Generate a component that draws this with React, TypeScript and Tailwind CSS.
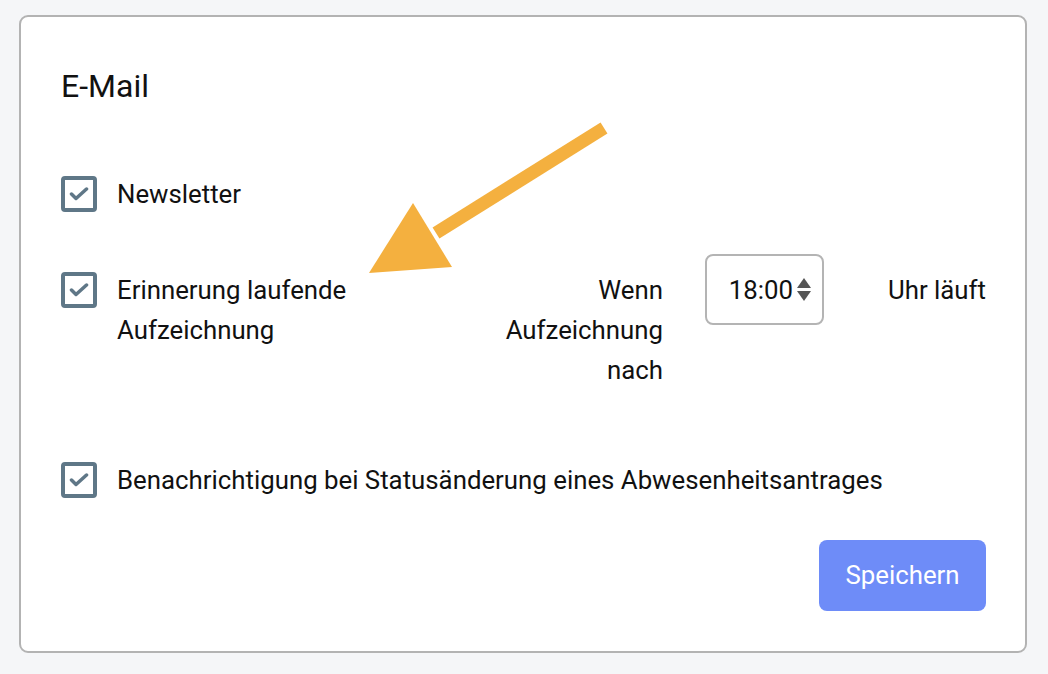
import React from "react";

// case à cocher cochée, dessinée comme dans la capture
const CheckBox = ({ className = "" }: { className?: string }) => (
    <div
        className={
            "w-[36px] h-[36px] shrink-0 rounded-[4px] border-[4px] border-[#5f7787] flex items-center justify-center " +
            className
        }>
        <svg width="20" height="14" viewBox="0 0 20 14" fill="none">
            <path d="M2.5 7 L7 11.5 L17.5 2" stroke="#5f7787" strokeWidth="3.5" strokeLinecap="round" strokeLinejoin="round" />
        </svg>
    </div>
);

const TimeInput = ({ value }: { value: string }) => (
    <div className="w-[119px] h-[71px] shrink-0 rounded-[8px] border-2 border-[#b4b4b4] flex items-center justify-end pr-[10px] gap-[3px]">
        <span className="text-[25.8px] leading-[40px]">{value}</span>
        <svg width="16" height="25" viewBox="0 0 16 25">
            <polygon points="8,1 15,11 1,11" fill="#555" />
            <polygon points="1,14 15,14 8,24" fill="#555" />
        </svg>
    </div>
);

export default function App() {
    return (
        <div
            className="relative w-[1048px] h-[674px] bg-[#f5f6f8] pt-[15px] pl-[19px] pr-[21px] text-[#111]"
            style={{ fontFamily: "Roboto, 'Liberation Sans', sans-serif" }}>
            <div className="h-[638px] bg-white border-2 border-[#b3b3b3] rounded-[9px] pt-[49px] pl-[40px] pr-[39px] flex flex-col">
                <h2 className="text-[32px] leading-[40px] font-normal">E-Mail</h2>

                {/* Newsletter */}
                <div className="mt-[68px] flex items-center gap-[20px]">
                    <CheckBox />
                    <span className="text-[25.8px] leading-[40px]">Newsletter</span>
                </div>

                {/* Erinnerung */}
                <div className="mt-[40px] flex items-start">
                    <div className="w-[432px] shrink-0 flex items-start gap-[20px] pt-[18px]">
                        <CheckBox />
                        <span className="text-[25.8px] leading-[40px] -mt-[2px] w-[260px]">
                            Erinnerung laufende Aufzeichnung
                        </span>
                    </div>
                    <div className="w-[170px] shrink-0 text-right text-[25.8px] leading-[40px] pt-[16px]">
                        Wenn Aufzeichnung nach
                    </div>
                    <div className="ml-[42px]">
                        <TimeInput value="18:00" />
                    </div>
                    <div className="ml-auto pt-[16px] text-[25.8px] leading-[40px] whitespace-nowrap">Uhr läuft</div>
                </div>

                {/* Benachrichtigung */}
                <div className="mt-[70px] flex items-center gap-[20px]">
                    <CheckBox />
                    <span className="text-[25.8px] leading-[40px]">
                        Benachrichtigung bei Statusänderung eines Abwesenheitsantrages
                    </span>
                </div>

                <div className="mt-[40px] flex justify-end">
                    <button className="w-[167px] h-[71px] rounded-[8px] bg-[#6e8cf8] text-white text-[25.8px]">
                        Speichern
                    </button>
                </div>
            </div>

            {/* flèche d'annotation */}
            <svg className="absolute left-0 top-0 pointer-events-none" width="1048" height="674" viewBox="0 0 1048 674">
                <line x1="604" y1="128" x2="436" y2="233" stroke="#f4b03f" strokeWidth="13" />
                <polygon points="413,203 369,273 452,267" fill="#f4b03f" />
            </svg>
        </div>
    );
}
